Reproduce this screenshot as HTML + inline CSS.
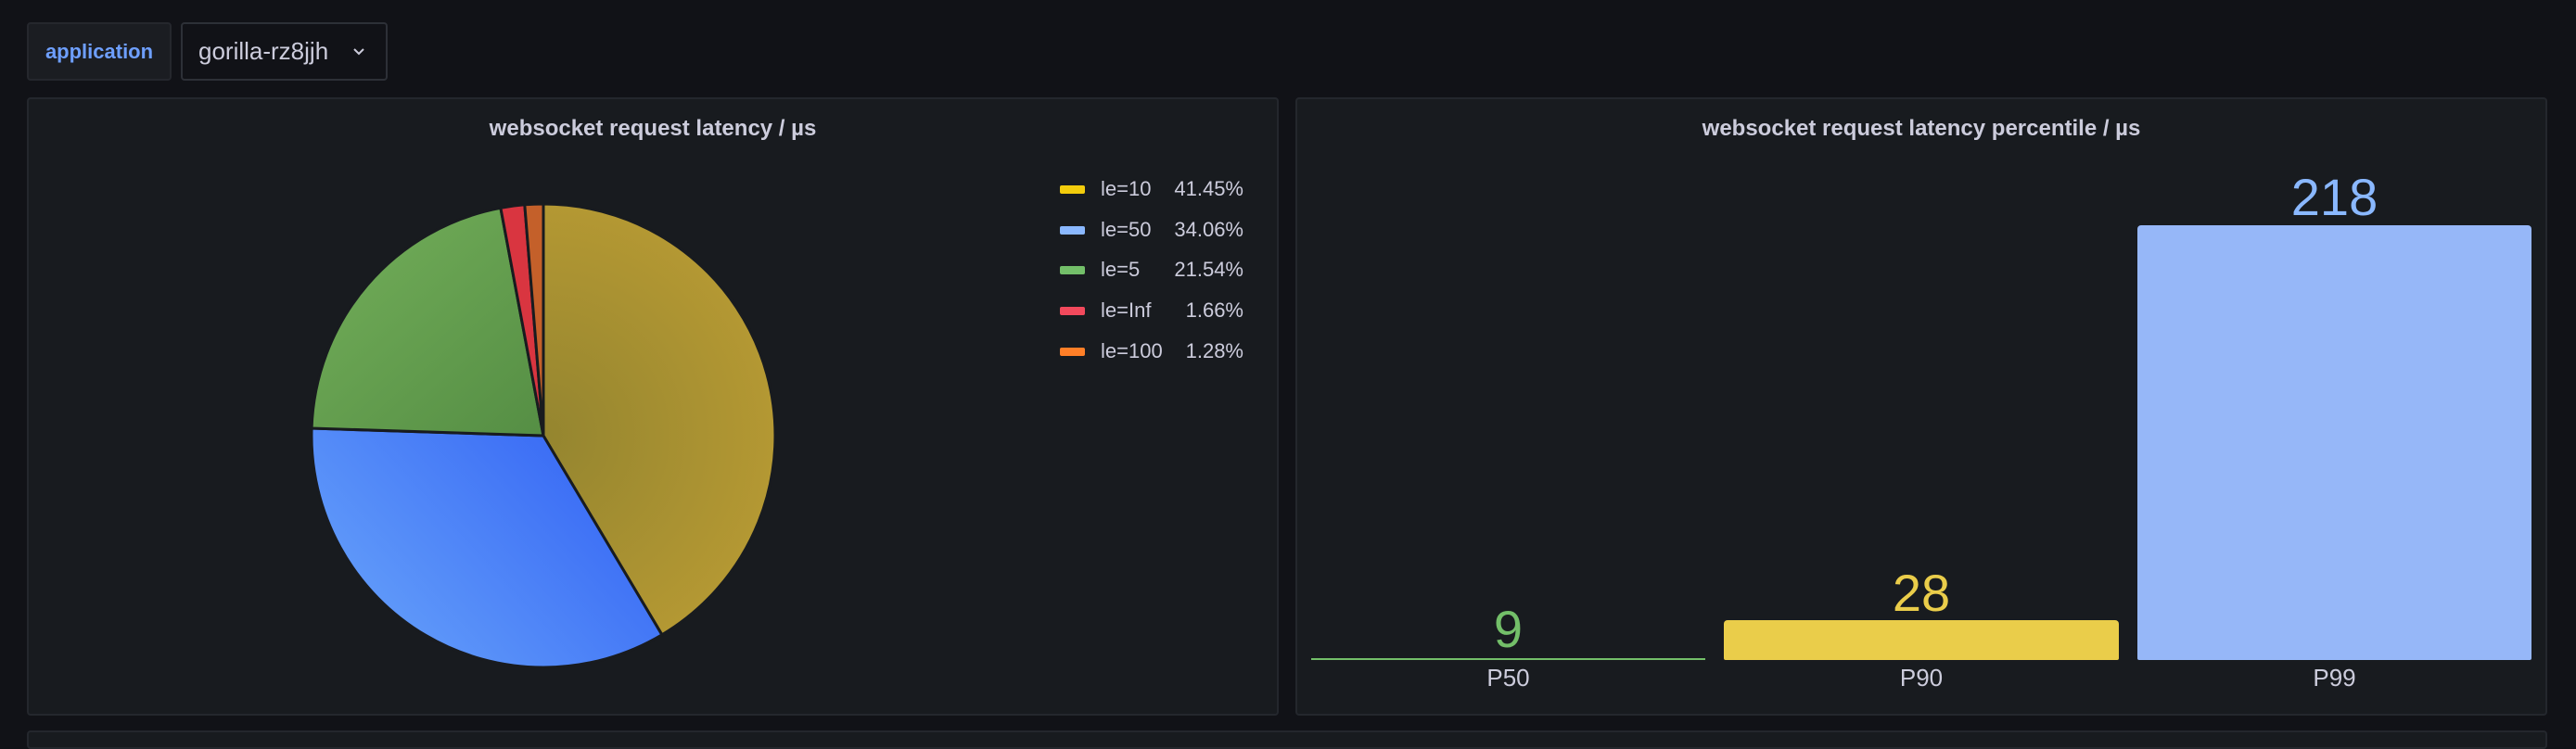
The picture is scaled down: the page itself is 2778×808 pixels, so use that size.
<!DOCTYPE html>
<html><head><meta charset="utf-8"><style>
*{margin:0;padding:0;box-sizing:border-box}
body{width:2778px;height:792px;background:#111217;position:relative;overflow:hidden;font-family:"Liberation Sans",sans-serif}
.abs{position:absolute}
.panel{position:absolute;background:#181b1f;border:2px solid #24272d;border-radius:4px}
.title{position:absolute;top:125px;left:0;right:0;text-align:center;color:#ccccdc;font-weight:bold;font-size:24px}
.leg{position:absolute;left:1143px;width:27px;height:9px;border-radius:2px}
.lt{position:absolute;left:1187px;color:#ccccdc;font-size:22px}
.lv{position:absolute;left:1221px;width:120px;text-align:right;color:#ccccdc;font-size:22px}
.val{position:absolute;text-align:center;font-size:56px}
.lab{position:absolute;text-align:center;color:#ccccdc;font-size:26px;top:716px}
</style></head><body>
<div class="abs" style="left:29px;top:24px;width:156px;height:63px;background:#1b1d22;border:2px solid #25272d;border-radius:4px;color:#6e9fff;font-weight:bold;font-size:22px;line-height:59px;text-align:center">application</div>
<div class="abs" style="left:195px;top:24px;width:223px;height:63px;background:#111217;border:2px solid #2d3037;border-radius:4px;color:#ccccdc;font-size:26px;line-height:59px;padding-left:17px">gorilla-rz8jjh</div>
<svg class="abs" style="left:380px;top:51px" width="14" height="10"><path d="M2 2 L7 7 L12 2" stroke="#ccccdc" stroke-width="2" fill="none"/></svg>

<div class="panel" style="left:29px;top:105px;width:1350px;height:667px"></div>
<div class="abs" style="left:29px;top:0;width:1350px"><div class="title">websocket request latency / µs</div></div>
<svg class="abs" style="left:0;top:0" width="1390" height="792">
<defs>
<radialGradient id="gy" cx="586" cy="470" r="250" gradientUnits="userSpaceOnUse"><stop offset="0" stop-color="#94852f"/><stop offset="1" stop-color="#b49833"/></radialGradient>
<linearGradient id="gb" x1="586" y1="470" x2="336" y2="700" gradientUnits="userSpaceOnUse"><stop offset="0" stop-color="#3c6ef5"/><stop offset="1" stop-color="#6aa6fb"/></linearGradient>
<linearGradient id="gg" x1="586" y1="470" x2="400" y2="260" gradientUnits="userSpaceOnUse"><stop offset="0" stop-color="#558e44"/><stop offset="1" stop-color="#6ea956"/></linearGradient>
</defs>
<g stroke="#181b1f" stroke-width="3" stroke-linejoin="round">
<path d="M586 470 L586 220 A250 250 0 0 1 713.9 684.8 Z" fill="url(#gy)"/>
<path d="M586 470 L713.9 684.8 A250 250 0 0 1 336.1 462 Z" fill="url(#gb)"/>
<path d="M586 470 L336.1 462 A250 250 0 0 1 539.9 224.3 Z" fill="url(#gg)"/>
<path d="M586 470 L539.9 224.3 A250 250 0 0 1 565.8 220.8 Z" fill="#d93540"/>
<path d="M586 470 L565.8 220.8 A250 250 0 0 1 586 220 Z" fill="#c4602a"/>
</g>
</svg>
<div class="leg" style="top:200px;background:#f2cc0c"></div><div class="lt" style="top:191px">le=10</div><div class="lv" style="top:191px">41.45%</div>
<div class="leg" style="top:244px;background:#8ab8ff"></div><div class="lt" style="top:235px">le=50</div><div class="lv" style="top:235px">34.06%</div>
<div class="leg" style="top:287px;background:#73bf69"></div><div class="lt" style="top:278px">le=5</div><div class="lv" style="top:278px">21.54%</div>
<div class="leg" style="top:331px;background:#f2495c"></div><div class="lt" style="top:322px">le=Inf</div><div class="lv" style="top:322px">1.66%</div>
<div class="leg" style="top:375px;background:#ff7f27"></div><div class="lt" style="top:366px">le=100</div><div class="lv" style="top:366px">1.28%</div>

<div class="panel" style="left:1397px;top:105px;width:1350px;height:667px"></div>
<div class="abs" style="left:1397px;top:0;width:1350px"><div class="title">websocket request latency percentile / µs</div></div>
<div class="abs" style="left:1414px;top:710px;width:425px;height:2px;background:#73bf69"></div>
<div class="abs" style="left:1859px;top:669px;width:426px;height:43px;background:#eacd4a;border-radius:4px 4px 2px 2px"></div>
<div class="abs" style="left:2305px;top:243px;width:425px;height:469px;background:#96b7f8;border-radius:4px 4px 2px 2px"></div>
<div class="val" style="left:1414px;width:425px;top:646px;color:#73bf69">9</div>
<div class="val" style="left:1859px;width:426px;top:607px;color:#eacd4a">28</div>
<div class="val" style="left:2305px;width:425px;top:180px;color:#8ab8ff">218</div>
<div class="lab" style="left:1414px;width:425px">P50</div>
<div class="lab" style="left:1859px;width:426px">P90</div>
<div class="lab" style="left:2305px;width:425px">P99</div>

<div class="panel" style="left:29px;top:788px;width:2718px;height:20px"></div>
</body></html>
